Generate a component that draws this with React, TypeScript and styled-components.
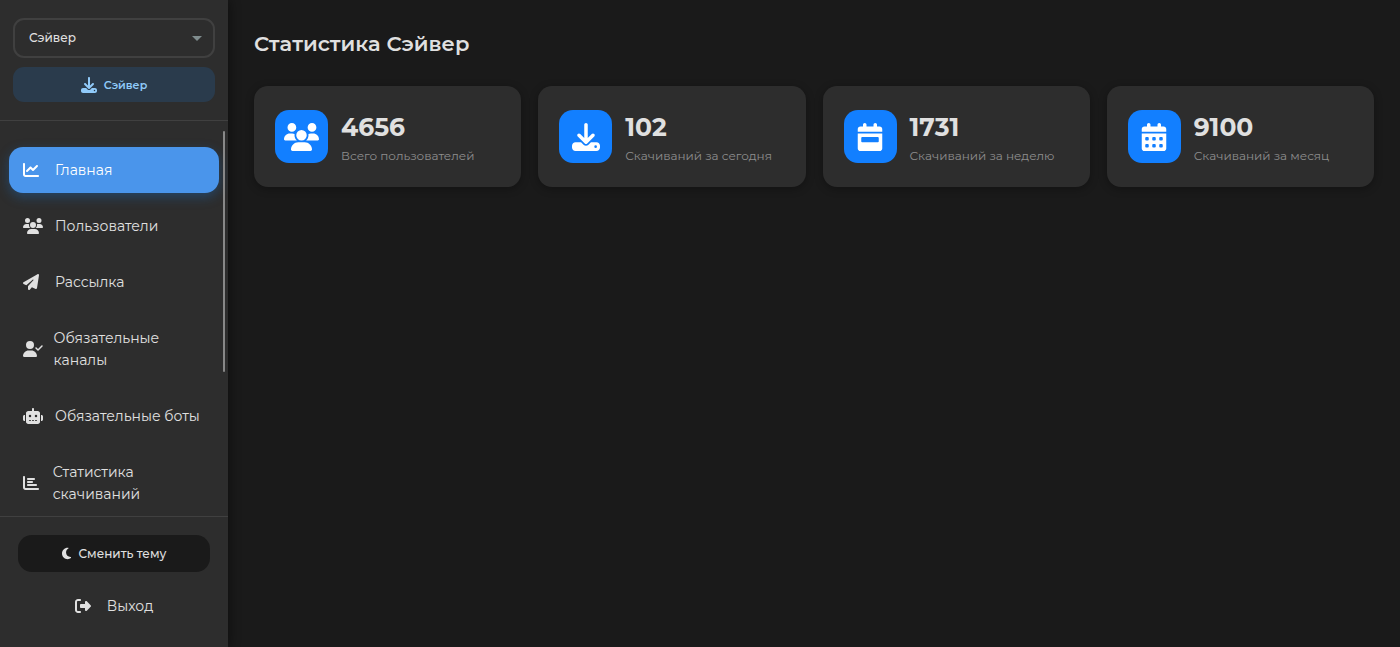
import React from 'react';
import styled, { createGlobalStyle, css } from 'styled-components';
import {
  FaCalendarDays,
  FaCalendarWeek,
  FaChartBar,
  FaChartLine,
  FaDownload,
  FaMoon,
  FaPaperPlane,
  FaRightFromBracket,
  FaRobot,
  FaUserCheck,
  FaUsers,
} from 'react-icons/fa6';

const GlobalStyle = createGlobalStyle`
  *, *::before, *::after { box-sizing: border-box; }
  body {
    margin: 0;
    background: #1a1a1a;
    color: #e0e0e0;
    font-family: Montserrat, Inter, 'Noto Sans', sans-serif;
    font-size: 14px;
    line-height: 22px;
  }
  button, select { font: inherit; color: inherit; }
  svg { flex: none; }
  /* glyphs keep their natural width at a height of 1em */
  svg[viewBox^='0 0 640'] { width: 1.25em; }
  svg[viewBox^='0 0 384'] { width: 0.75em; }
`;

const Layout = styled.div`
  display: grid;
  grid-template-columns: 228px minmax(0, 1fr);
  height: 100vh;
`;

const Sidebar = styled.aside`
  display: flex;
  flex-direction: column;
  min-height: 0;
  background: #2d2d2d;
  box-shadow: 2px 0 10px rgba(0, 0, 0, 0.4);
`;

const SidebarHeader = styled.div`
  display: flex;
  flex-direction: column;
  gap: 9px;
  padding: 18px 13px;
  border-bottom: 1px solid #404040;
`;

const SelectWrap = styled.div`
  position: relative;
`;

const BotSelect = styled.select`
  display: block;
  width: 100%;
  height: 40px;
  padding: 0 32px 0 14px;
  appearance: none;
  background: #2d2d2d;
  border: 2px solid #404040;
  border-radius: 11px;
  font-size: 12px;
  font-weight: 500;
`;

const SelectArrow = styled.span`
  position: absolute;
  top: 18px;
  right: 13px;
  border: 5px solid transparent;
  border-top-color: #7f8c8d;
  border-bottom: 0;
  pointer-events: none;
`;

const BotButton = styled.button`
  display: flex;
  align-items: center;
  justify-content: center;
  gap: 7px;
  height: 35px;
  border: 0;
  border-radius: 11px;
  background: #2a3b4c;
  color: #90caf9;
  font-size: 11px;
  font-weight: 600;

  svg { font-size: 16px; }
`;

const NavArea = styled.div`
  position: relative;
  flex: 1;
  min-height: 0;
`;

const Nav = styled.nav`
  height: 100%;
  padding: 26px 9px 0;
  overflow-y: auto;
  scrollbar-width: none;
`;

const NavList = styled.ul`
  display: flex;
  flex-direction: column;
  gap: 10px;
  margin: 0;
  padding: 0;
  list-style: none;
`;

const ScrollThumb = styled.span`
  position: absolute;
  top: 10px;
  right: 3px;
  width: 2px;
  height: 61%;
  border-radius: 1px;
  background: #888;
`;

const NavLink = styled.a<{ $active?: boolean }>`
  display: flex;
  align-items: center;
  gap: 12px;
  padding: 12px 14px;
  border-radius: 14px;
  color: #e0e0e0;
  text-decoration: none;

  ${({ $active }) =>
    $active &&
    css`
      background: #4a95eb;
      color: #fff;
      box-shadow: 0 4px 12px rgba(25, 118, 210, 0.35);
    `}
`;

const NavIcon = styled.span`
  display: flex;
  flex: 0 1 20px;
  min-width: 0;
  font-size: 16px;
`;

const SidebarFooter = styled.div`
  display: flex;
  flex-direction: column;
  gap: 12px;
  padding: 18px 18px 19px;
  border-top: 1px solid #404040;
`;

const ThemeButton = styled.button`
  display: flex;
  align-items: center;
  justify-content: center;
  gap: 7px;
  height: 37px;
  border: 0;
  border-radius: 14px;
  background: #1a1a1a;
  font-size: 12px;
  font-weight: 500;

  svg { font-size: 13px; }
`;

const LogoutLink = styled.a`
  display: flex;
  align-items: center;
  justify-content: center;
  gap: 16px;
  padding: 11px 0;
  color: #e0e0e0;
  text-decoration: none;

  svg { font-size: 16px; }
`;

const Main = styled.main`
  padding: 26px;
`;

const Title = styled.h1`
  margin: 0 0 24px;
  font-size: 21px;
  font-weight: 600;
  line-height: 36px;
`;

const CardGrid = styled.div`
  display: grid;
  grid-template-columns: repeat(auto-fit, minmax(240px, 1fr));
  gap: 17px;
`;

const Card = styled.article`
  display: flex;
  align-items: center;
  gap: 13px;
  padding: 21px;
  border-radius: 14px;
  background: #2d2d2d;
  box-shadow: 0 2px 8px rgba(0, 0, 0, 0.3);
`;

const CardIcon = styled.span`
  display: grid;
  place-items: center;
  flex: 0 0 53px;
  height: 53px;
  border-radius: 14px;
  background: #127fff;
  color: #fff;
  font-size: 28px;
`;

const CardValue = styled.div`
  font-size: 25px;
  font-weight: 700;
  line-height: 40px;
`;

const CardLabel = styled.div`
  padding-bottom: 2px;
  color: #8e8e8e;
  font-size: 12px;
  line-height: 17px;
`;

const navItems = [
  { label: 'Главная', icon: <FaChartLine />, active: true },
  { label: 'Пользователи', icon: <FaUsers /> },
  { label: 'Рассылка', icon: <FaPaperPlane /> },
  { label: 'Обязательные каналы', icon: <FaUserCheck /> },
  { label: 'Обязательные боты', icon: <FaRobot /> },
  { label: 'Статистика скачиваний', icon: <FaChartBar /> },
];

const stats = [
  { value: '4656', label: 'Всего пользователей', icon: <FaUsers /> },
  { value: '102', label: 'Скачиваний за сегодня', icon: <FaDownload /> },
  { value: '1731', label: 'Скачиваний за неделю', icon: <FaCalendarWeek /> },
  { value: '9100', label: 'Скачиваний за месяц', icon: <FaCalendarDays /> },
];

export default function App() {
  return (
    <>
      <GlobalStyle />
      <Layout>
        <Sidebar>
          <SidebarHeader>
            <SelectWrap>
              <BotSelect aria-label="Бот" defaultValue="saver">
                <option value="saver">Сэйвер</option>
              </BotSelect>
              <SelectArrow />
            </SelectWrap>
            <BotButton type="button">
              <FaDownload />
              Сэйвер
            </BotButton>
          </SidebarHeader>
          <NavArea>
            <Nav>
              <NavList>
                {navItems.map(({ label, icon, active }) => (
                  <li key={label}>
                    <NavLink href="#" $active={active} aria-current={active ? 'page' : undefined}>
                      <NavIcon>{icon}</NavIcon>
                      <span>{label}</span>
                    </NavLink>
                  </li>
                ))}
              </NavList>
            </Nav>
            <ScrollThumb />
          </NavArea>
          <SidebarFooter>
            <ThemeButton type="button">
              <FaMoon />
              Сменить тему
            </ThemeButton>
            <LogoutLink href="#">
              <FaRightFromBracket />
              Выход
            </LogoutLink>
          </SidebarFooter>
        </Sidebar>
        <Main>
          <Title>Статистика Сэйвер</Title>
          <CardGrid>
            {stats.map(({ value, label, icon }) => (
              <Card key={label}>
                <CardIcon>{icon}</CardIcon>
                <div>
                  <CardValue>{value}</CardValue>
                  <CardLabel>{label}</CardLabel>
                </div>
              </Card>
            ))}
          </CardGrid>
        </Main>
      </Layout>
    </>
  );
}
